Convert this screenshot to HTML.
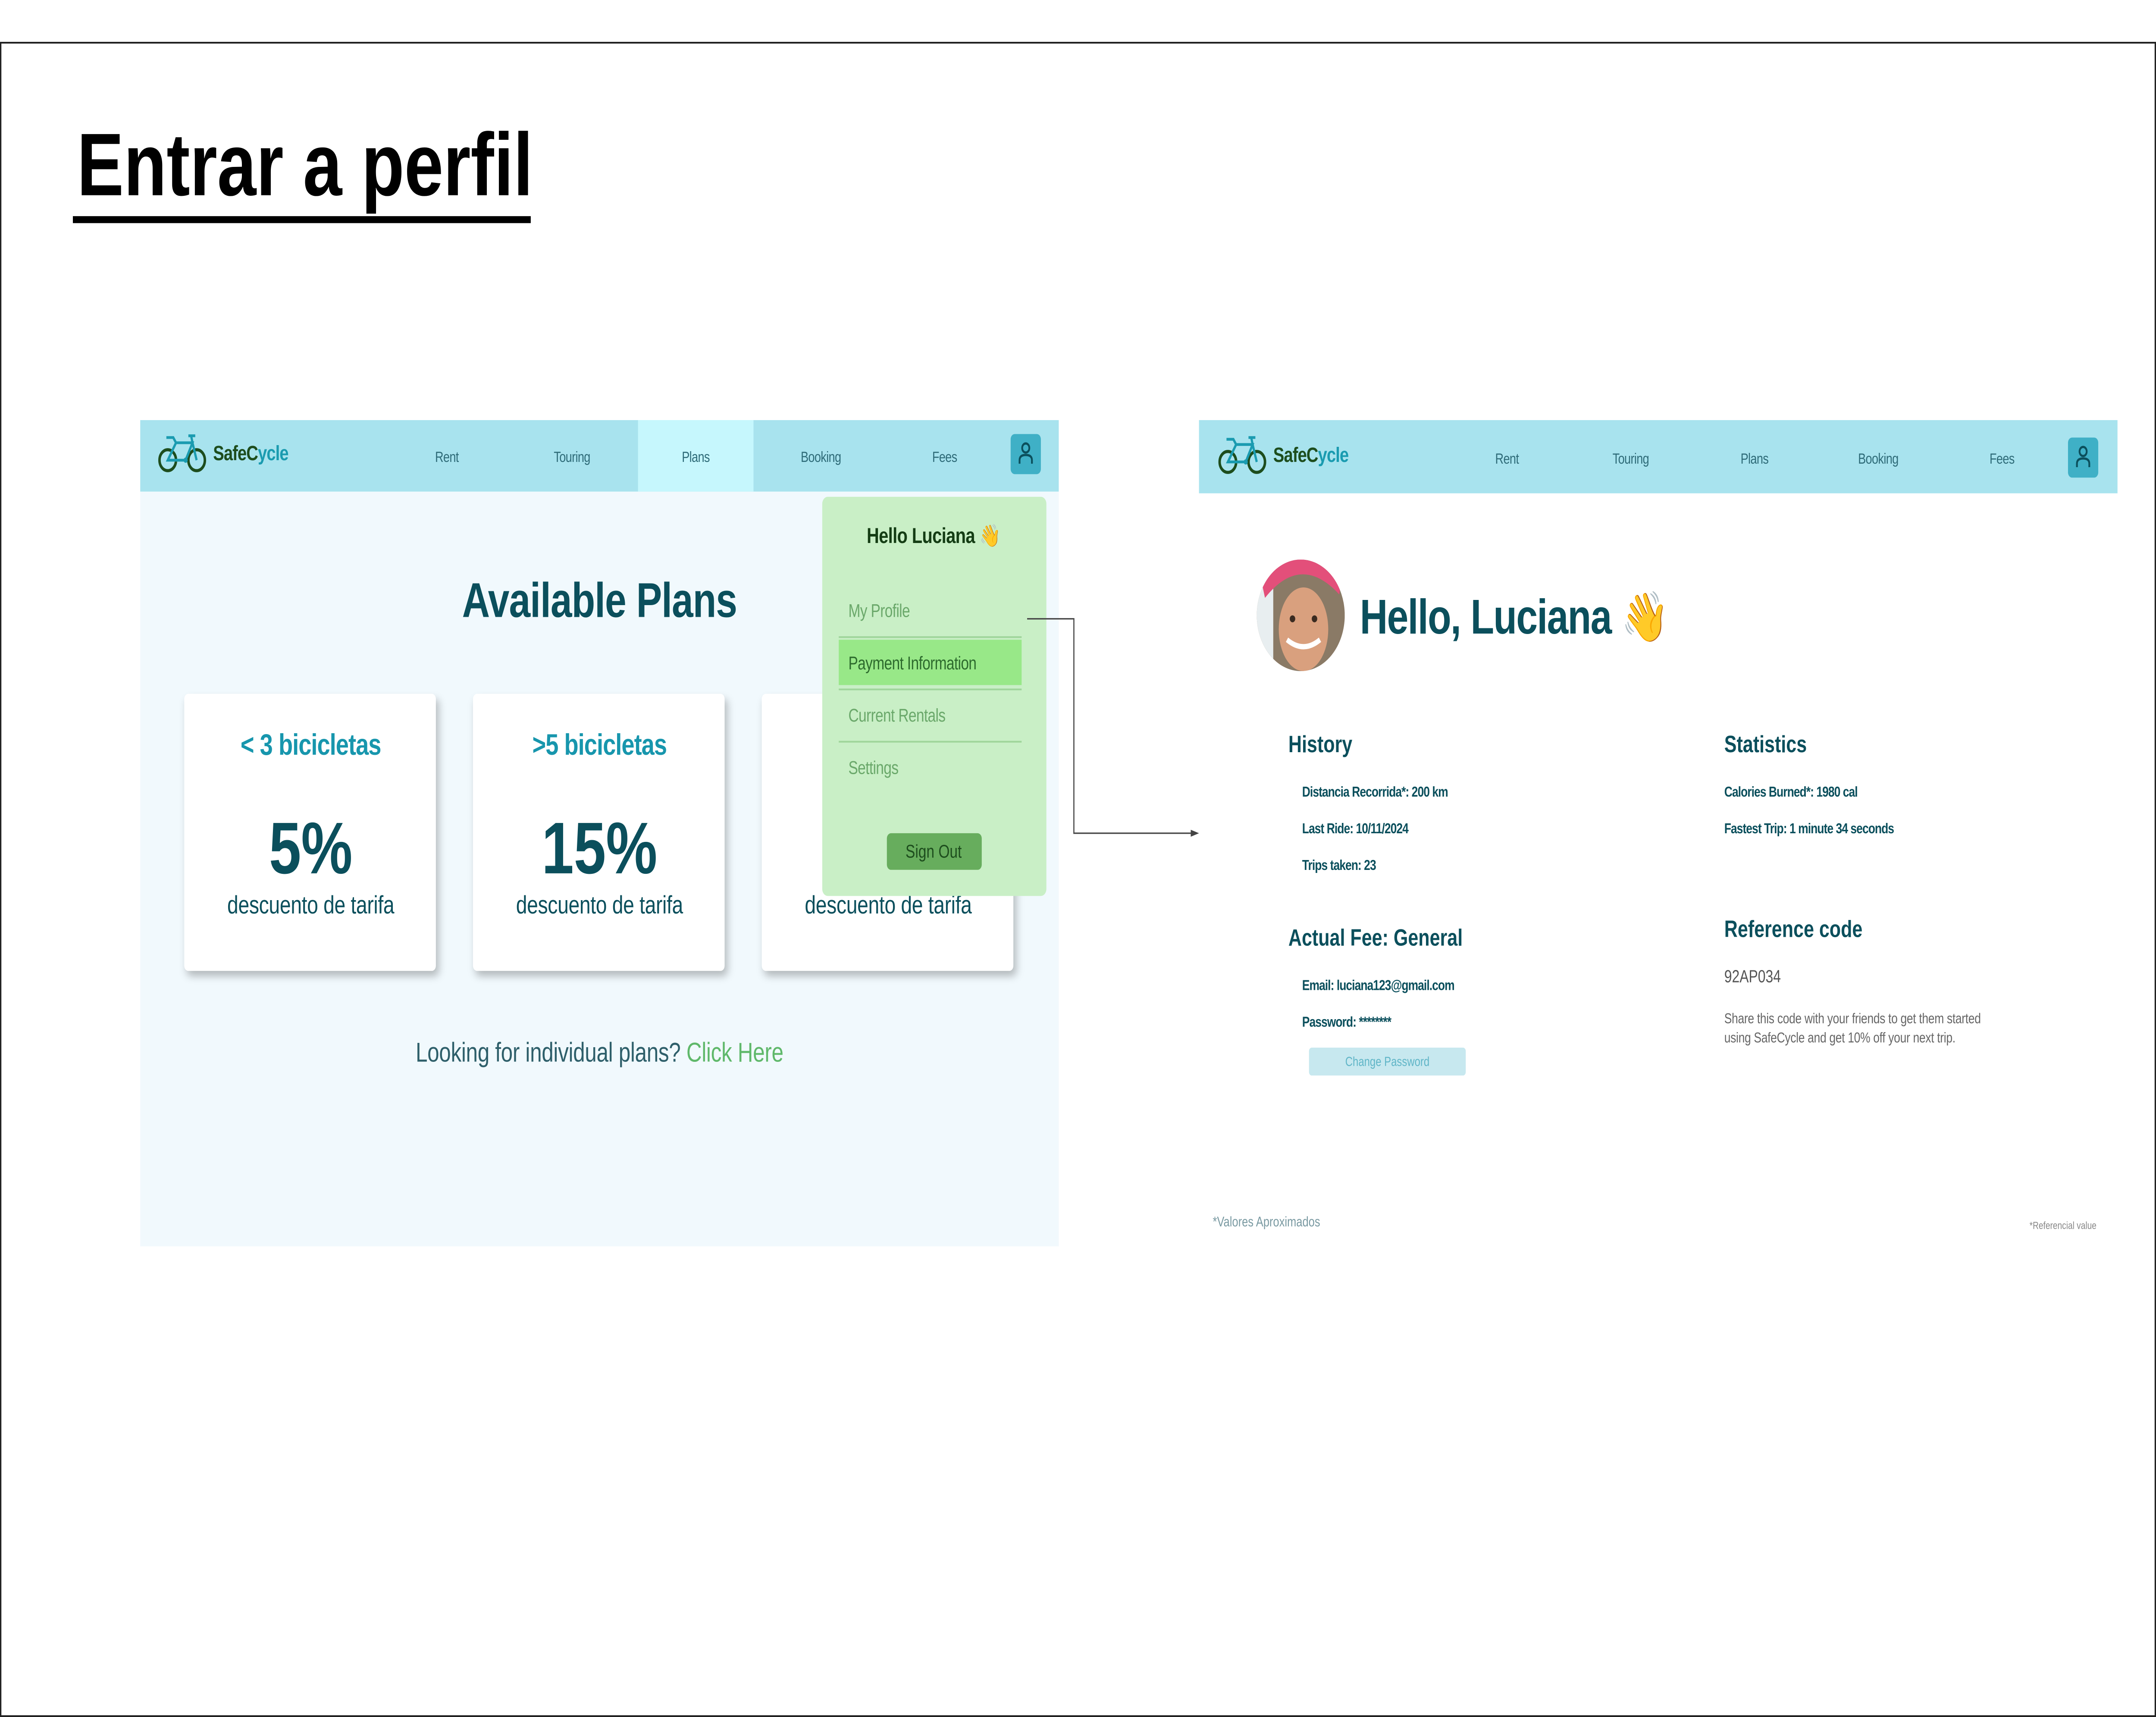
<!DOCTYPE html>
<html><head><meta charset="utf-8"><style>
html,body{margin:0;padding:0;width:100vw;height:100vh;overflow:hidden;background:#fff;}
svg.root{position:absolute;left:0;top:0;width:100vw;height:100vh;display:block}
#s{position:relative;width:1568px;height:985px;font-family:"Liberation Sans",sans-serif;background:#fff}
.a{position:absolute;white-space:nowrap;}
.c{transform:translate(-50%,-50%);}
.m{transform:translateY(-50%);}
.nav{color:#2e6b78;font-size:8.5px;letter-spacing:-0.2px}
.dk{color:#0b4f5c}
.card{position:absolute;top:398px;width:183px;height:159px;background:#fff;border-radius:3px;box-shadow:2px 3px 5px rgba(0,0,0,.25);}
.sep{position:absolute;left:610px;width:133px;height:1px;background:#9fd59b}
.di{color:#6aa86a;font-size:10.5px;letter-spacing:-0.2px}
.sm{font-size:8.3px;font-weight:bold;color:#0b4f5c;letter-spacing:-0.3px}
</style></head><body>
<svg class="root" viewBox="0 0 1568 985" preserveAspectRatio="none"><foreignObject x="0" y="0" width="1568" height="985"><div xmlns="http://www.w3.org/1999/xhtml" id="s">
<div class="a" style="left:0;top:24px;width:1566px;height:959px;border:1px solid #222;"></div>
<div class="a" style="left:56px;top:65px;font-size:51px;font-weight:bold;color:#000;letter-spacing:0px">Entrar a perfil</div>
<div class="a" style="left:53px;top:124px;width:333px;height:4px;background:#000"></div>

<div class="a" style="left:102px;top:241px;width:668px;height:474px;background:#f1f9fd"></div>
<div class="a" style="left:102px;top:241px;width:668px;height:41px;background:#a8e3ee"></div>
<div class="a" style="left:464px;top:241px;width:84px;height:41px;background:#c6f7fd"></div>
<svg class="a" style="left:115px;top:249px" width="36" height="23" viewBox="0 0 36 23"><circle cx="7" cy="15" r="6" fill="none" stroke="#1d4d1d" stroke-width="1.8"/><circle cx="28" cy="15" r="6" fill="none" stroke="#1d4d1d" stroke-width="1.8"/><path d="M7 15 L13 5 L25 5 L20 15 Z M25 5 L28 15 M13 5 L11 2 L6 2 M22 1 L27 1 M24 1 L25 5" fill="none" stroke="#1a9bb0" stroke-width="1.6"/><circle cx="20" cy="15" r="1.5" fill="#1a9bb0"/></svg>
<div class="a m" style="left:155px;top:260px;font-size:12px;font-weight:bold;letter-spacing:-0.3px"><span style="color:#1d4d1d">SafeC</span><span style="color:#1a9bb0">ycle</span></div>
<div class="a c nav" style="left:325px;top:262px">Rent</div>
<div class="a c nav" style="left:416px;top:262px">Touring</div>
<div class="a c nav" style="left:506px;top:262px">Plans</div>
<div class="a c nav" style="left:597px;top:262px">Booking</div>
<div class="a c nav" style="left:687px;top:262px">Fees</div>
<div class="a" style="left:735px;top:249px;width:22px;height:23px;background:#3fb0c6;border-radius:3px"></div>
<svg class="a" style="left:738px;top:252px" width="16" height="17" viewBox="0 0 16 17"><circle cx="8" cy="5" r="2.6" fill="none" stroke="#0b4f5c" stroke-width="1.3"/><path d="M3.5 14 V12 Q3.5 9 8 9 Q12.5 9 12.5 12 V14" fill="none" stroke="#0b4f5c" stroke-width="1.3"/></svg>
<div class="a c dk" style="left:436px;top:345px;font-size:28px;font-weight:bold;letter-spacing:-0.3px">Available Plans</div>

<div class="card" style="left:134px"></div>
<div class="card" style="left:344px"></div>
<div class="card" style="left:554px"></div>
<div class="a c" style="left:226px;top:428px;font-size:17px;color:#1796ad;font-weight:bold;letter-spacing:-0.3px">&lt; 3 bicicletas</div>
<div class="a c" style="left:436px;top:428px;font-size:17px;color:#1796ad;font-weight:bold;letter-spacing:-0.3px">&gt;5 bicicletas</div>
<div class="a c dk" style="left:226px;top:487px;font-size:42px;font-weight:bold">5%</div>
<div class="a c dk" style="left:436px;top:487px;font-size:42px;font-weight:bold">15%</div>
<div class="a c dk" style="left:226px;top:520px;font-size:14.5px;letter-spacing:-0.1px">descuento de tarifa</div>
<div class="a c dk" style="left:436px;top:520px;font-size:14.5px;letter-spacing:-0.1px">descuento de tarifa</div>
<div class="a c dk" style="left:646px;top:520px;font-size:14.5px;letter-spacing:-0.1px">descuento de tarifa</div>
<div class="a c" style="left:436px;top:605px;font-size:15.5px;color:#2e5f6a;letter-spacing:-0.1px">Looking for individual plans? <span style="color:#5fb86a">Click Here</span></div>

<div class="a" style="left:598px;top:285px;width:163px;height:229px;background:#c9efc6;border-radius:4px"></div>
<div class="a c" style="left:679px;top:308px;font-size:12.5px;font-weight:bold;color:#143d14;letter-spacing:-0.2px">Hello Luciana <span style="color:#e8b33a">👋</span></div>
<div class="a m di" style="left:617px;top:351px">My Profile</div>
<div class="sep" style="top:365px"></div>
<div class="a" style="left:610px;top:367px;width:133px;height:26px;background:#98e888"></div>
<div class="a m di" style="left:617px;top:381px;color:#2d6b2d">Payment Information</div>
<div class="sep" style="top:395px"></div>
<div class="a m di" style="left:617px;top:411px">Current Rentals</div>
<div class="sep" style="top:425px"></div>
<div class="a m di" style="left:617px;top:441px">Settings</div>
<div class="a" style="left:645px;top:478px;width:69px;height:21px;background:#67ad5d;border-radius:3px"></div>
<div class="a c" style="left:679px;top:489px;font-size:10.5px;color:#1d4d1d">Sign Out</div>

<svg class="a" style="left:0;top:0" width="1568" height="985"><path d="M747 355 H781 V478 H868" fill="none" stroke="#444" stroke-width="0.8"/><path d="M866 476 L872 478 L866 480 Z" fill="#444"/></svg>

<div class="a" style="left:872px;top:241px;width:668px;height:42px;background:#a8e3ee"></div>
<svg class="a" style="left:886px;top:250px" width="36" height="23" viewBox="0 0 36 23"><circle cx="7" cy="15" r="6" fill="none" stroke="#1d4d1d" stroke-width="1.8"/><circle cx="28" cy="15" r="6" fill="none" stroke="#1d4d1d" stroke-width="1.8"/><path d="M7 15 L13 5 L25 5 L20 15 Z M25 5 L28 15 M13 5 L11 2 L6 2 M22 1 L27 1 M24 1 L25 5" fill="none" stroke="#1a9bb0" stroke-width="1.6"/><circle cx="20" cy="15" r="1.5" fill="#1a9bb0"/></svg>
<div class="a m" style="left:926px;top:261px;font-size:12px;font-weight:bold;letter-spacing:-0.3px"><span style="color:#1d4d1d">SafeC</span><span style="color:#1a9bb0">ycle</span></div>
<div class="a c nav" style="left:1096px;top:263px">Rent</div>
<div class="a c nav" style="left:1186px;top:263px">Touring</div>
<div class="a c nav" style="left:1276px;top:263px">Plans</div>
<div class="a c nav" style="left:1366px;top:263px">Booking</div>
<div class="a c nav" style="left:1456px;top:263px">Fees</div>
<div class="a" style="left:1504px;top:251px;width:22px;height:23px;background:#3fb0c6;border-radius:3px"></div>
<svg class="a" style="left:1507px;top:254px" width="16" height="17" viewBox="0 0 16 17"><circle cx="8" cy="5" r="2.6" fill="none" stroke="#0b4f5c" stroke-width="1.3"/><path d="M3.5 14 V12 Q3.5 9 8 9 Q12.5 9 12.5 12 V14" fill="none" stroke="#0b4f5c" stroke-width="1.3"/></svg>

<svg class="a" style="left:914px;top:321px" width="64" height="64" viewBox="0 0 64 64"><defs><clipPath id="cp"><circle cx="32" cy="32" r="32"/></clipPath></defs><g clip-path="url(#cp)"><rect width="64" height="64" fill="#8a7a66"/><rect x="0" y="0" width="12" height="64" fill="#e8eef0"/><ellipse cx="34" cy="40" rx="18" ry="24" fill="#d9a07e"/><path d="M6 22 Q32 -4 60 20 L64 0 L0 0Z" fill="#e34f7a"/><path d="M22 46 Q34 54 46 46" stroke="#fff" stroke-width="3" fill="none"/><circle cx="26" cy="34" r="2" fill="#3a2a20"/><circle cx="42" cy="34" r="2" fill="#3a2a20"/></g></svg>
<div class="a m dk" style="left:989px;top:354px;font-size:28px;font-weight:bold;letter-spacing:-0.5px">Hello, Luciana <span style="color:#f2b829">👋</span></div>

<div class="a m dk" style="left:937px;top:427px;font-size:13.5px;font-weight:bold">History</div>
<div class="a m sm" style="left:947px;top:454px">Distancia Recorrida*: 200 km</div>
<div class="a m sm" style="left:947px;top:475px">Last Ride: 10/11/2024</div>
<div class="a m sm" style="left:947px;top:496px">Trips taken: 23</div>
<div class="a m dk" style="left:1254px;top:427px;font-size:13.5px;font-weight:bold">Statistics</div>
<div class="a m sm" style="left:1254px;top:454px">Calories Burned*: 1980 cal</div>
<div class="a m sm" style="left:1254px;top:475px">Fastest Trip: 1 minute 34 seconds</div>

<div class="a m dk" style="left:937px;top:538px;font-size:13.5px;font-weight:bold">Actual Fee: General</div>
<div class="a m sm" style="left:947px;top:565px">Email: luciana123@gmail.com</div>
<div class="a m sm" style="left:947px;top:586px">Password: ********</div>
<div class="a" style="left:952px;top:601px;width:114px;height:16px;background:#c7e8ef;border-radius:2px"></div>
<div class="a c" style="left:1009px;top:609px;font-size:7.5px;color:#5fb5c7">Change Password</div>

<div class="a m dk" style="left:1254px;top:533px;font-size:13.5px;font-weight:bold">Reference code</div>
<div class="a m" style="left:1254px;top:561px;font-size:10px;color:#555">92AP034</div>
<div class="a" style="left:1254px;top:579px;width:190px;font-size:8.3px;line-height:11px;color:#666;white-space:normal;letter-spacing:-0.1px">Share this code with your friends to get them started using SafeCycle and get 10% off your next trip.</div>
<div class="a m" style="left:882px;top:701px;font-size:8px;color:#7a9aa2">*Valores Aproximados</div>
<div class="a m" style="left:1476px;top:704px;font-size:6px;color:#888">*Referencial value</div>
</div></foreignObject></svg>
</body></html>
